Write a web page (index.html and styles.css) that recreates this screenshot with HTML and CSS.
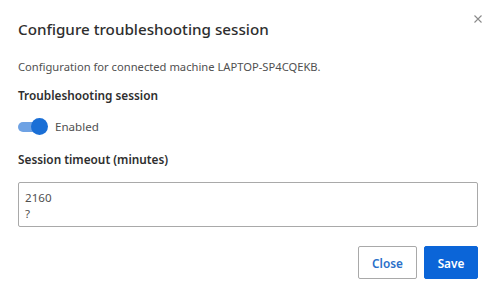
FILE: index.html
```html
<!DOCTYPE html>
<html>
<head>
<meta charset="utf-8">
<link rel="stylesheet" href="styles.css">
</head>
<body>
<div class="dialog">
  <button class="close-x" aria-label="Close">
    <svg width="8" height="8" viewBox="0 0 8 8"><path d="M0.5 0.5L7.5 7.5M7.5 0.5L0.5 7.5" stroke="#8a8a8a" stroke-width="1.1" fill="none"/></svg>
  </button>
  <h1 class="title">Configure troubleshooting session</h1>
  <p class="desc">Configuration for connected machine LAPTOP-SP4CQEKB.</p>
  <div class="label">Troubleshooting session</div>
  <div class="toggle-row">
    <span class="toggle"><span class="track"></span><span class="knob"></span></span>
    <span class="toggle-text">Enabled</span>
  </div>
  <div class="label label2">Session timeout (minutes)</div>
  <div class="textarea"><div class="line">2160</div><div class="line">?</div></div>
  <div class="actions">
    <button class="btn btn-secondary">Close</button>
    <button class="btn btn-primary">Save</button>
  </div>
</div>
</body>
</html>
```
FILE: styles.css
```css
html, body {
  margin: 0;
  padding: 0;
  background: #ffffff;
}
body {
  font-family: "Noto Sans", "Open Sans", sans-serif;
  color: #2b2b2b;
}
.dialog {
  position: relative;
  width: 496px;
  height: 298px;
  box-sizing: border-box;
  padding: 17px 18px 0 18px;
}
.close-x {
  position: absolute;
  top: 15px;
  right: 14px;
  width: 8px;
  height: 8px;
  padding: 0;
  border: 0;
  background: transparent;
  display: flex;
  align-items: center;
  justify-content: center;
}
.title {
  margin: 0;
  font-size: 15.2px;
  font-weight: 500;
  line-height: 24px;
  color: #2e2e2e;
}
.desc {
  margin: 17px 0 0 0;
  font-size: 11.2px;
  line-height: 18px;
  color: #505050;
}
.label {
  margin-top: 10px;
  font-size: 11.8px;
  font-weight: 600;
  line-height: 18px;
  color: #2e2e2e;
}
.toggle-row {
  margin-top: 14px;
  display: flex;
  align-items: center;
  gap: 7px;
  height: 18px;
}
.toggle {
  position: relative;
  width: 30px;
  height: 18px;
  display: inline-block;
}
.track {
  position: absolute;
  left: 0;
  top: 4px;
  width: 28px;
  height: 10px;
  border-radius: 5px;
  background: #6ea2e4;
}
.knob {
  position: absolute;
  left: 13px;
  top: 0;
  width: 17px;
  height: 17px;
  border-radius: 50%;
  background: #1a6fd6;
}
.toggle-text {
  font-size: 11.6px;
  color: #505050;
  line-height: 18px;
}
.label2 {
  margin-top: 14px;
}
.textarea {
  margin-top: 14px;
  height: 45px;
  box-sizing: border-box;
  border: 1px solid #a9a9a9;
  border-radius: 2px;
  padding: 7px 6px 0 6px;
  font-size: 11.6px;
  color: #505050;
}
.line {
  line-height: 15.5px;
}
.actions {
  margin-top: 19px;
  display: flex;
  justify-content: flex-end;
  gap: 7px;
}
.btn {
  height: 33px;
  box-sizing: border-box;
  border-radius: 2px;
  font-family: "Noto Sans", "Open Sans", sans-serif;
  font-size: 11.8px;
  font-weight: 600;
  cursor: pointer;
}
.btn-secondary {
  width: 59px;
  background: #ffffff;
  border: 1px solid #a9a9a9;
  color: #2a6fc9;
}
.btn-primary {
  width: 54px;
  background: #0b65d8;
  border: 1px solid #0b65d8;
  color: #ffffff;
}
```
